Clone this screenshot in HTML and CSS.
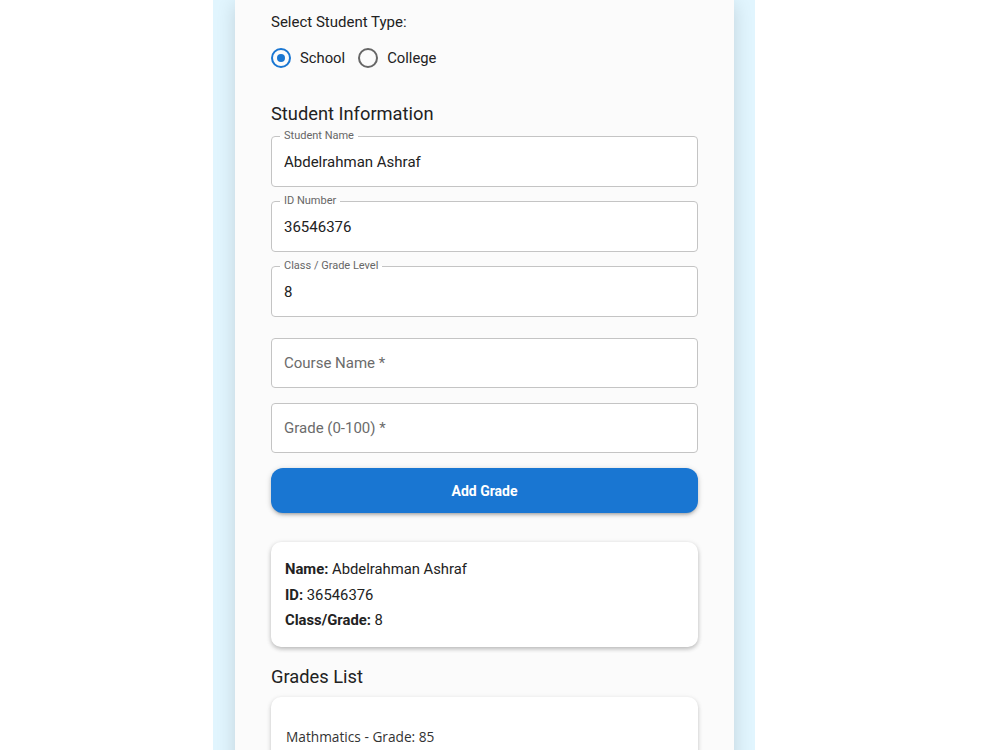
FILE: index.html
```html
<!DOCTYPE html>
<html lang="en">
<head>
  <meta charset="UTF-8" />
  <meta name="viewport" content="width=device-width, initial-scale=1" />
  <title>Student Grades</title>
  <link rel="stylesheet" href="styles.css">
</head>
<body>

  <div class="page">
    <div class="panel">

      <div class="type-label">Select Student Type:</div>
      <div class="radio-row">
        <label class="radio"><span class="radio-icon checked"></span>School</label>
        <label class="radio"><span class="radio-icon"></span>College</label>
      </div>

      <h2 class="section-title">Student Information</h2>

      <fieldset class="field">
        <legend>Student Name</legend>
        <input type="text" value="Abdelrahman Ashraf">
      </fieldset>
      <fieldset class="field">
        <legend>ID Number</legend>
        <input type="text" value="36546376">
      </fieldset>
      <fieldset class="field">
        <legend>Class / Grade Level</legend>
        <input type="text" value="8">
      </fieldset>

      <div class="course-fields">
        <fieldset class="field plain">
          <input type="text" placeholder="Course Name *">
        </fieldset>
        <fieldset class="field plain">
          <input type="text" placeholder="Grade (0-100) *">
        </fieldset>
      </div>

      <button class="add-btn">Add Grade</button>

      <div class="info-card">
        <p><b>Name:</b> Abdelrahman Ashraf</p>
        <p><b>ID:</b> 36546376</p>
        <p><b>Class/Grade:</b> 8</p>
      </div>

      <h2 class="section-title grades-title">Grades List</h2>

      <div class="grades-card">
        <div class="grade-item">Mathmatics - Grade: 85</div>
      </div>

    </div>
  </div>

</body>
</html>
```

FILE: styles.css
```css
body {
  margin: 0;
  background: #ffffff;
  font-family: Roboto, "Liberation Sans", Arial, sans-serif;
  color: #222;
}

.page {
  width: 542px;
  margin-left: 213px;
  min-height: 750px;
  background: #e1f5fe;
  padding: 0 21px 0 22px;
  box-sizing: border-box;
}

.panel {
  background: #fbfbfb;
  min-height: 760px;
  padding: 11px 36px 20px;
  box-shadow: 0 4px 18px rgba(0, 0, 0, 0.14);
}

.type-label {
  font-size: 15px;
  line-height: 22px;
  color: #222;
}

.radio-row {
  display: flex;
  align-items: center;
  gap: 13px;
  height: 38px;
  margin-top: 6px;
}
.radio {
  display: flex;
  align-items: center;
  gap: 9px;
  font-size: 14.8px;
  color: #222;
}
.radio-icon {
  width: 16px;
  height: 16px;
  border: 2px solid #666;
  border-radius: 50%;
  box-sizing: content-box;
  position: relative;
}
.radio-icon.checked {
  border-color: #1976d2;
}
.radio-icon.checked::after {
  content: "";
  position: absolute;
  left: 4px;
  top: 4px;
  width: 8px;
  height: 8px;
  border-radius: 50%;
  background: #1976d2;
}

.section-title {
  font-size: 18.3px;
  font-weight: 400;
  line-height: 28px;
  margin: 23px 0 2px;
  color: #222;
}

.field {
  margin: 0 0 8px;
  padding: 0 12px 4px;
  border: 1px solid #c4c4c4;
  border-radius: 4px;
  background: #fff;
}
.field legend {
  font-size: 11px;
  line-height: 12px;
  color: #666;
  padding: 0 4px;
  margin-left: -4px;
}
.field input {
  display: block;
  width: 100%;
  height: 40px;
  border: none;
  outline: none;
  padding: 0;
  background: transparent;
  font-family: inherit;
  font-size: 15px;
  color: #222;
}
.field input::placeholder {
  color: #6b6b6b;
  opacity: 1;
}

.course-fields {
  margin-top: 21px;
}
.field.plain {
  padding-bottom: 0;
  margin-bottom: 15px;
}
.field.plain input {
  height: 48px;
}

.add-btn {
  display: block;
  width: 100%;
  height: 45px;
  margin-top: 15px;
  border: none;
  border-radius: 12px;
  background: #1976d2;
  color: #fff;
  font-family: inherit;
  font-size: 14px;
  font-weight: 700;
  box-shadow: 0 3px 3px -2px rgba(0,0,0,0.2), 0 2px 4px rgba(0,0,0,0.14), 0 1px 6px rgba(0,0,0,0.12);
  cursor: pointer;
}

.info-card {
  margin-top: 29px;
  background: #fff;
  border-radius: 10px;
  padding: 15px 14px 13px;
  box-shadow: 0 2px 4px rgba(0, 0, 0, 0.22), 0 1px 6px rgba(0, 0, 0, 0.08);
}
.info-card p {
  margin: 0;
  font-size: 14.8px;
  line-height: 25.5px;
  color: #222;
}
.info-card b {
  font-weight: 700;
}

.grades-title {
  margin-top: 16px;
  margin-bottom: 6px;
}

.grades-card {
  background: #fff;
  border-radius: 10px;
  padding: 29px 15px 20px;
  box-shadow: 0 2px 4px rgba(0, 0, 0, 0.18), 0 1px 6px rgba(0, 0, 0, 0.06);
}
.grade-item {
  font-family: "Open Sans", "Liberation Sans", sans-serif;
  font-size: 13.7px;
  line-height: 22px;
  color: #333;
}
```
